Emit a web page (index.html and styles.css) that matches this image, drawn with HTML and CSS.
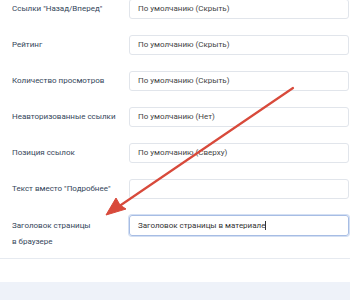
FILE: index.html
```html
<!DOCTYPE html>
<html lang="ru">

<head>
    <meta charset="UTF-8">
    <meta name="viewport" content="width=device-width, initial-scale=1.0">
    <title>Параметры материала</title>
    <link rel="stylesheet" href="styles.css">
</head>

<body>
    <div class="panel">
        <div class="form">
            <div class="row">
                <label class="label">Ссылки "Назад/Вперед"</label>
                <div class="field">По умолчанию (Скрыть)</div>
            </div>
            <div class="row">
                <label class="label">Рейтинг</label>
                <div class="field">По умолчанию (Скрыть)</div>
            </div>
            <div class="row">
                <label class="label">Количество просмотров</label>
                <div class="field">По умолчанию (Скрыть)</div>
            </div>
            <div class="row">
                <label class="label">Неавторизованные ссылки</label>
                <div class="field">По умолчанию (Нет)</div>
            </div>
            <div class="row">
                <label class="label">Позиция ссылок</label>
                <div class="field">По умолчанию (Сверху)</div>
            </div>
            <div class="row">
                <label class="label">Текст вместо "Подробнее"</label>
                <div class="field"></div>
            </div>
            <div class="row row-last">
                <label class="label">Заголовок страницы<br>в браузере</label>
                <div class="field field-focus"><span class="caret">Заголовок страницы в материале</span></div>
            </div>
        </div>
    </div>
    <div class="footer"></div>

    <!-- annotation arrow drawn over the form -->
    <svg class="arrow" width="350" height="300" viewBox="0 0 350 300">
        <line x1="293" y1="88" x2="118" y2="207" stroke="#d84a3b" stroke-width="2.2" stroke-linecap="round" />
        <path d="M106 215 L116 198 L120 205 L126 209 Z" fill="#d84a3b" stroke="#d84a3b" stroke-width="1" stroke-linejoin="round" />
    </svg>
</body>

</html>
```

FILE: styles.css
```css
body {
    margin: 0;
    font-family: Roboto, "Liberation Sans", sans-serif;
    background-color: #fff;
    color: #34465a;
    position: relative;
    overflow: hidden;
    height: 300px;
}

.panel {
    background-color: #fff;
    border-bottom: 1px solid #e6eaf0;
}

.form {
    margin-top: -1px;
    padding-left: 12px;
}

.row {
    display: flex;
    align-items: flex-start;
    height: 36px;
}

.row-last {
    height: 43px;
}

.label {
    width: 117px;
    flex-shrink: 0;
    font-size: 8px;
    line-height: 16px;
    padding-top: 2px;
}

.row-last .label {
    padding-top: 3px;
}

.field {
    flex-grow: 1;
    height: 20px;
    box-sizing: border-box;
    margin-right: 1px;
    border: 1px solid #e1e5eb;
    border-radius: 3px;
    padding-left: 8px;
    font-size: 8px;
    line-height: 18px;
    color: #444;
}

.field-focus {
    height: 21px;
    border-color: #a7bde4;
    box-shadow: 0 0 0 1px #d3dff3;
    line-height: 19px;
    color: #333;
}

.caret {
    border-right: 1px solid #333;
}

.footer {
    height: 24px;
    margin-top: 23px;
    background-color: #eef2f9;
}

.arrow {
    position: absolute;
    left: 0;
    top: 0;
    pointer-events: none;
}
```
